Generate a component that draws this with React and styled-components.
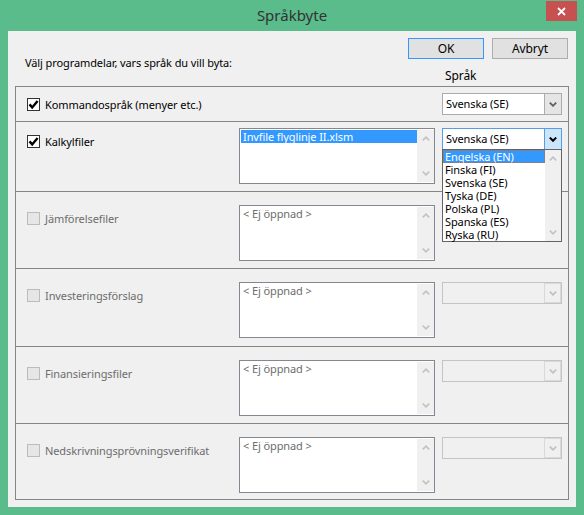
import styled, { createGlobalStyle } from "styled-components";

const GlobalStyle = createGlobalStyle`
  html, body {
    margin: 0;
    padding: 0;
    background: #5abb8b;
  }
  * {
    box-sizing: border-box;
  }
`;

const Frame = styled.div`
  width: 584px;
  height: 515px;
  display: flex;
  flex-direction: column;
  background: #5abb8b;
  font-family: "Noto Sans", "Open Sans", sans-serif;
  font-size: 11px;
  letter-spacing: -0.1px;
  color: #000;
`;

const TitleBar = styled.div`
  height: 31px;
  display: grid;
  grid-template-columns: 1fr auto 1fr;
  align-items: start;
`;

const Title = styled.div`
  grid-column: 2;
  font-size: 15px;
  letter-spacing: 0;
  line-height: 30px;
  color: #333;
`;

const CloseButton = styled.div`
  grid-column: 3;
  justify-self: end;
  width: 31px;
  height: 20px;
  margin: 1px 7px 0 0;
  background: #c75050;
  display: flex;
  align-items: center;
  justify-content: center;
`;

const Client = styled.div`
  flex: 1;
  margin: 0 8px 8px 8px;
  background: #f0f0f0;
  display: flex;
  flex-direction: column;
`;

const Header = styled.div`
  height: 55px;
  display: grid;
  grid-template-columns: 1fr 168px;
`;

const Prompt = styled.div`
  padding: 24px 0 0 17px;
  line-height: 15px;
`;

const HeaderRight = styled.div`
  display: flex;
  flex-direction: column;
  padding-top: 7px;
`;

const ButtonRow = styled.div`
  display: flex;
  gap: 8px;
`;

const Button = styled.div`
  width: 76px;
  height: 21px;
  border: 1px solid ${(p) => (p.$default ? "#3399ff" : "#adadad")};
  background: #e1e1e1;
  display: flex;
  align-items: center;
  justify-content: center;
  font-size: 12px;
`;

const LangHeading = styled.div`
  margin: 9px 0 0 37px;
  line-height: 15px;
  font-size: 12px;
`;

const Group = styled.div`
  flex: 1;
  margin: 0 7px 7px 7px;
  border: 1px solid #858585;
  display: flex;
  flex-direction: column;
`;

const Row = styled.div`
  flex-shrink: 0;
  display: grid;
  grid-template-columns: 205px 196px 120px;
  column-gap: 7px;
  align-items: start;
  padding: 6px 0 0 11px;
  border-bottom: ${(p) => (p.$last ? "none" : "1px solid #858585")};
  box-sizing: content-box;
  ${(p) => (p.$tall ? "padding-top: 13px; height: " + (p.$h - 13) + "px;" : "height: " + (p.$h - 6) + "px;")}
`;

const Label = styled.label`
  display: flex;
  align-items: center;
  gap: 5px;
  height: 13px;
  margin-top: ${(p) => (p.$center ? "5px" : "7px")};
  color: ${(p) => (p.$disabled ? "#6d6d6d" : "#000")};
  white-space: nowrap;
`;

const Box = styled.span`
  width: 13px;
  height: 13px;
  flex-shrink: 0;
  border: 1px solid ${(p) => (p.$disabled ? "#bcbcbc" : "#333")};
  background: ${(p) => (p.$disabled ? "#e6e6e6" : "#fff")};
  display: flex;
  align-items: center;
  justify-content: center;
`;

const ListBox = styled.div`
  grid-column: 2;
  height: 56px;
  border: 1px solid #828790;
  background: #fff;
  display: flex;
  padding: 1px 0 1px 1px;
`;

const Items = styled.div`
  flex: 1;
  display: flex;
  flex-direction: column;
`;

const Item = styled.div`
  height: 13px;
  line-height: 13px;
  padding-left: 2px;
  white-space: nowrap;
  background: ${(p) => (p.$selected ? "#3399ff" : "transparent")};
  color: ${(p) => (p.$selected ? "#fff" : p.$muted ? "#6d6d6d" : "#000")};
  ${(p) => p.$focus && "outline: 1px dotted #c46a1e; outline-offset: -1px;"}
`;

const ScrollBar = styled.div`
  width: 17px;
  background: #f0f0f0;
  display: flex;
  flex-direction: column;
  justify-content: space-between;
`;

const ArrowCell = styled.div`
  height: 17px;
  display: flex;
  align-items: center;
  justify-content: center;
`;

const ComboWrap = styled.div`
  grid-column: 3;
  position: relative;
`;

const Combo = styled.div`
  height: 22px;
  display: flex;
  border: 1px solid
    ${(p) => (p.$focused ? "#569de5" : p.$disabled ? "#c4c4c4" : "#acacac")};
  background: ${(p) => (p.$disabled ? "#f0f0f0" : "#fff")};
`;

const ComboText = styled.div`
  flex: 1;
  padding-left: 3px;
  line-height: 20px;
  white-space: nowrap;
`;

const ComboButton = styled.div`
  width: 17px;
  display: flex;
  align-items: center;
  justify-content: center;
  border-left: 1px solid
    ${(p) => (p.$focused ? "#569de5" : p.$disabled ? "#d9d9d9" : "#acacac")};
  background: ${(p) =>
    p.$focused ? "#cde5fa" : p.$disabled ? "#f0f0f0" : "#e5e5e5"};
  ${(p) => p.$disabled && "box-shadow: inset -1px -1px 0 #d9d9d9, inset 0 1px 0 #d9d9d9;"}
`;

const DropList = styled.div`
  position: absolute;
  top: 21px;
  left: 0;
  width: 120px;
  height: 93px;
  border: 1px solid #646464;
  background: #fff;
  display: flex;
  z-index: 2;
`;

const DropItems = styled.div`
  flex: 1;
  display: flex;
  flex-direction: column;
`;

const DropScroll = styled(ScrollBar)`
  width: 16px;
`;

const Chevron = ({ up, color = "#c2c2c2", w = 1.6 }) => (
  <svg width="8" height="5" viewBox="0 0 8 5">
    <path
      d={up ? "M0.8 4.4 L4 1.2 L7.2 4.4" : "M0.8 0.6 L4 3.8 L7.2 0.6"}
      fill="none"
      stroke={color}
      strokeWidth={w}
    />
  </svg>
);

const Check = () => (
  <svg width="11" height="11" viewBox="0 0 11 11">
    <path d="M1.5 5.4 L4.2 8.4 L9.6 2" fill="none" stroke="#000" strokeWidth="2.4" />
  </svg>
);

const Scroll = ({ as: Comp = ScrollBar }) => (
  <Comp>
    <ArrowCell>
      <Chevron up />
    </ArrowCell>
    <ArrowCell>
      <Chevron />
    </ArrowCell>
  </Comp>
);

const languages = [
  "Engelska (EN)",
  "Finska (FI)",
  "Svenska (SE)",
  "Tyska (DE)",
  "Polska (PL)",
  "Spanska (ES)",
  "Ryska (RU)",
];

const fileRows = [
  { name: "Kalkylfiler", h: 69, enabled: true },
  { name: "Jämförelsefiler", h: 76 },
  { name: "Investeringsförslag", h: 77 },
  { name: "Finansieringsfiler", h: 76 },
  { name: "Nedskrivningsprövningsverifikat", h: 75, last: true },
];

const ComboBox = ({ value, focused, disabled, open }) => (
  <ComboWrap>
    <Combo $focused={focused} $disabled={disabled}>
      <ComboText>{value}</ComboText>
      <ComboButton $focused={focused} $disabled={disabled}>
        <Chevron
          color={focused ? "#000" : disabled ? "#c2c2c2" : "#606060"}
          w={focused ? 2 : 1.8}
        />
      </ComboButton>
    </Combo>
    {open && (
      <DropList>
        <DropItems>
          {languages.map((l, i) => (
            <Item key={l} $selected={i === 0} $focus={i === 0}>
              {l}
            </Item>
          ))}
        </DropItems>
        <Scroll as={DropScroll} />
      </DropList>
    )}
  </ComboWrap>
);

export default function App() {
  return (
    <>
      <GlobalStyle />
      <Frame>
        <TitleBar>
          <Title>Språkbyte</Title>
          <CloseButton>
            <svg width="9" height="9" viewBox="0 0 9 9">
              <path d="M1 1 L8 8 M8 1 L1 8" stroke="#fff" strokeWidth="1.8" />
            </svg>
          </CloseButton>
        </TitleBar>
        <Client>
          <Header>
            <Prompt>Välj programdelar, vars språk du vill byta:</Prompt>
            <HeaderRight>
              <ButtonRow>
                <Button $default>OK</Button>
                <Button>Avbryt</Button>
              </ButtonRow>
              <LangHeading>Språk</LangHeading>
            </HeaderRight>
          </Header>
          <Group>
            <Row $h={34}>
              <Label $center>
                <Box>
                  <Check />
                </Box>
                Kommandospråk (menyer etc.)
              </Label>
              <ComboBox value="Svenska (SE)" />
            </Row>
            {fileRows.map((r, i) => (
              <Row key={r.name} $h={r.h} $tall={i > 0} $last={r.last}>
                <Label $disabled={!r.enabled}>
                  <Box $disabled={!r.enabled}>{r.enabled && <Check />}</Box>
                  {r.name}
                </Label>
                <ListBox>
                  <Items>
                    {r.enabled ? (
                      <Item $selected>Invfile flyglinje II.xlsm</Item>
                    ) : (
                      <Item $muted>&lt; Ej öppnad &gt;</Item>
                    )}
                  </Items>
                  <Scroll />
                </ListBox>
                <ComboBox
                  value={r.enabled ? "Svenska (SE)" : ""}
                  focused={r.enabled}
                  open={r.enabled}
                  disabled={!r.enabled}
                />
              </Row>
            ))}
          </Group>
        </Client>
      </Frame>
    </>
  );
}
